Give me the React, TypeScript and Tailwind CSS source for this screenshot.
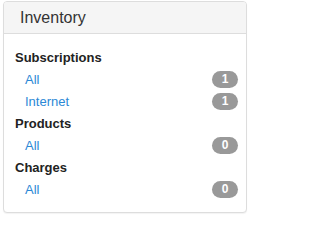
import React from "react";

const sections = [
  { title: "Subscriptions", items: [{ label: "All", count: 1 }, { label: "Internet", count: 1 }] },
  { title: "Products", items: [{ label: "All", count: 0 }] },
  { title: "Charges", items: [{ label: "All", count: 0 }] },
];

export default function App() {
  return (
    <div className="w-[250px] h-[220px] bg-white pl-[3px] pt-[1px]" style={{ fontFamily: '"Liberation Sans", Arial, sans-serif' }}>
      <div className="w-[244px] h-[212px] border border-[#dddddd] rounded-[4px] shadow-[0_1px_1px_rgba(0,0,0,0.05)] bg-white overflow-hidden">
        <div className="h-[32px] bg-[#f5f5f5] border-b border-[#dddddd] pl-[16px] flex items-center text-[16px] text-[#333333]">
          Inventory
        </div>
        <div className="pt-[13px] pl-[11px] pr-[8px]">
          {sections.map((s) => (
            <div key={s.title}>
              <div className="h-[22px] leading-[22px] text-[13px] font-bold text-[#222222]">{s.title}</div>
              {s.items.map((it, i) => (
                <div key={i} className="h-[22px] flex items-center justify-between pl-[10px]">
                  <span className="text-[13px] leading-[22px] text-[#2b88d6]">{it.label}</span>
                  <span className="w-[26px] h-[17px] -mt-[2px] rounded-full bg-[#999999] text-white text-[12px] font-semibold flex items-center justify-center leading-none">
                    {it.count}
                  </span>
                </div>
              ))}
            </div>
          ))}
        </div>
      </div>
    </div>
  );
}
